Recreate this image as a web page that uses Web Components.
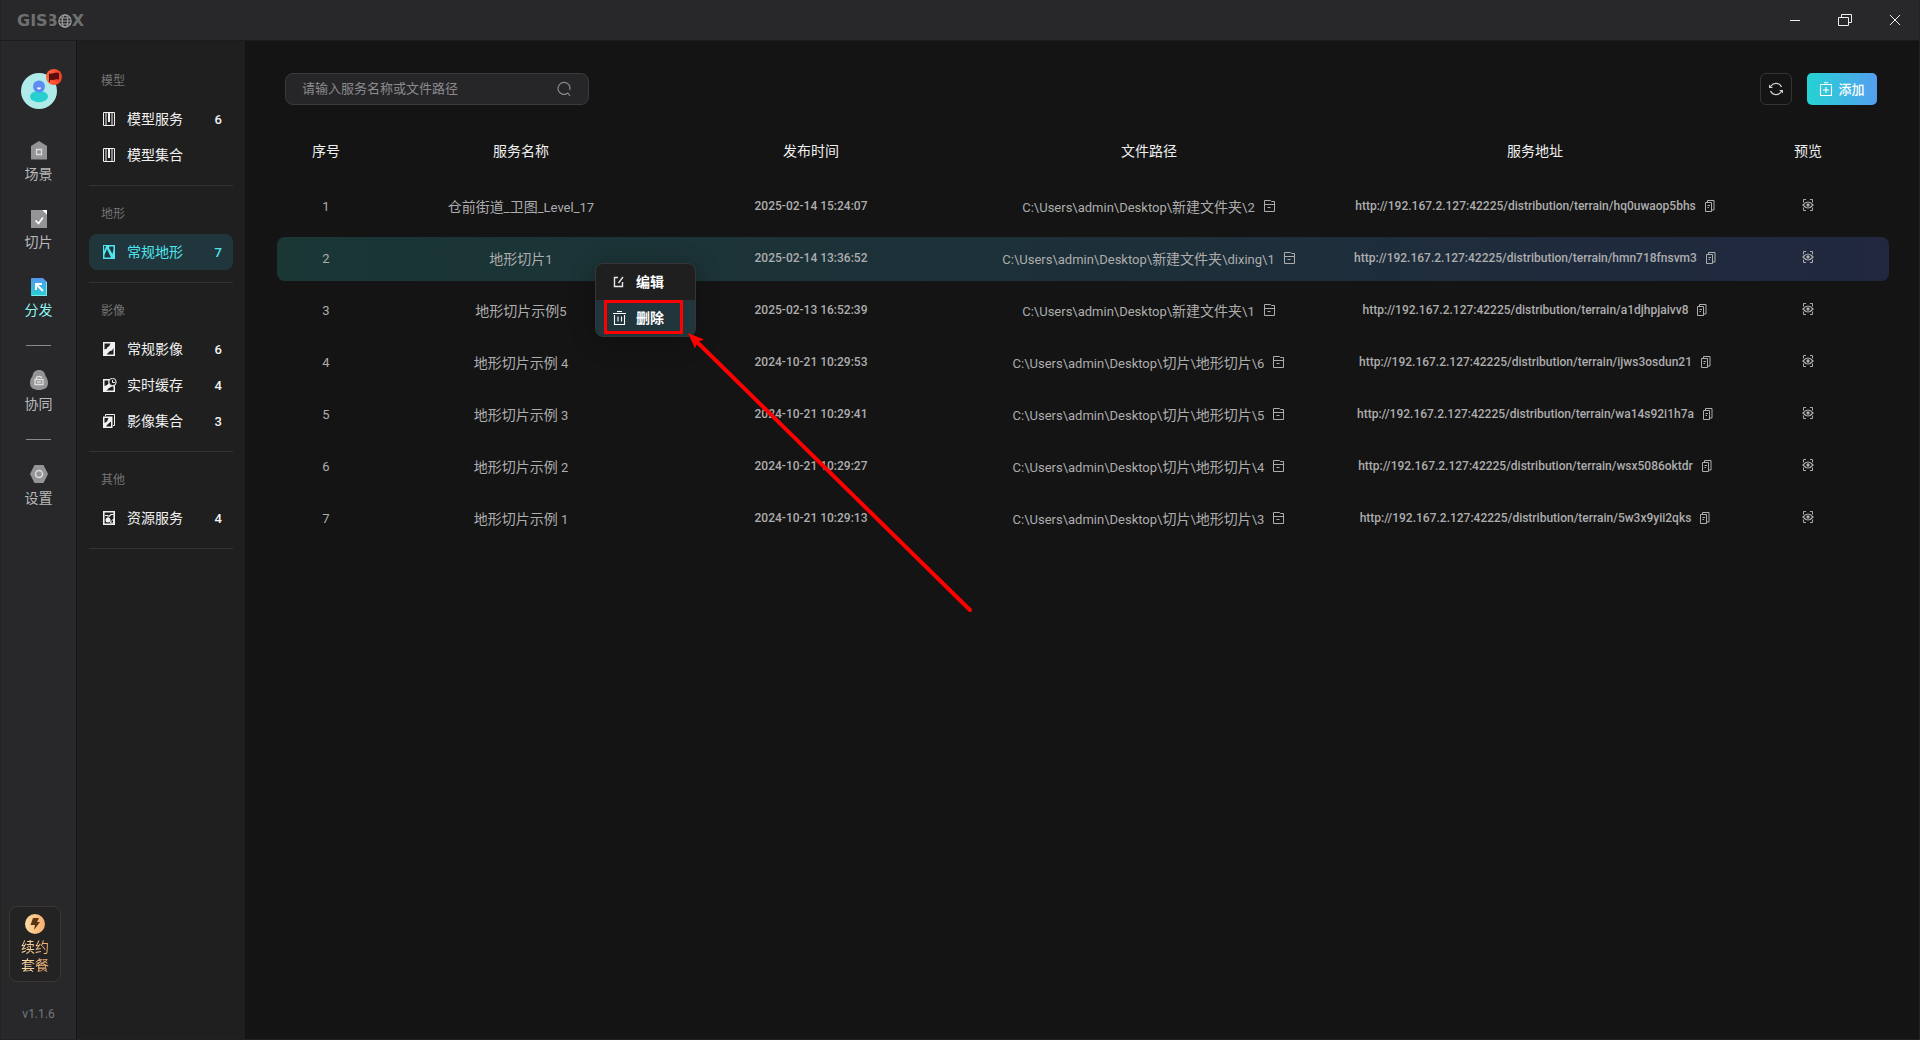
<!DOCTYPE html>
<html lang="zh-CN">
<head>
<meta charset="utf-8">
<title>GISBOX</title>
<style>
html, body { margin: 0; height: 100%; background: #141414; }
body { font-family: Roboto, "Noto Sans CJK SC", sans-serif; font-size: 14px; color: #dedede; }
</style>
</head>
<body>
<gb-app></gb-app>

<template id="t-app">
<style>
:host { display: flex; flex-direction: column; min-height: 100vh; position: relative; box-sizing: border-box; border: 1px solid #222224; border-top: 0; background: #141414; overflow: hidden; }
.body { flex: 1; display: flex; }
main { flex: 1; min-width: 0; padding: 32px 30px 32px 32px; display: flex; flex-direction: column; gap: 24px; }
</style>
<gb-titlebar></gb-titlebar>
<div class="body">
  <gb-rail></gb-rail>
  <gb-sidebar></gb-sidebar>
  <main>
    <gb-toolbar></gb-toolbar>
    <gb-table></gb-table>
  </main>
</div>
<gb-context-menu></gb-context-menu>
<gb-annotation></gb-annotation>
</template>

<template id="t-titlebar">
<style>
:host { display: flex; align-items: center; justify-content: space-between; height: 40px; background: #28282a; border-bottom: 1px solid #1c1c1d; padding: 0 16px; }
.logo { display: flex; align-items: center; font: 700 16px/20px "DejaVu Sans", sans-serif; color: #6f6f70; padding-top: 2px; }
.logo span.b { clip-path: inset(0 0 0 4px); margin-left: -2px; }
.logo svg { width: 14px; height: 14px; color: #a4a4a5; }
.win { display: flex; gap: 34px; }
button { all: unset; width: 16px; height: 16px; display: grid; place-items: center; color: #eee; }
</style>
<div class="logo"><span>GIS</span><span class="b">B</span><svg viewBox="0 0 14 14" fill="none" stroke="currentColor" stroke-width="1.1"><circle cx="7" cy="7" r="6.200"/><ellipse cx="7" cy="7" rx="2.800" ry="6"/><path d="M1 7h12M2 4h10M2 10h10"/></svg><span>X</span></div>
<div class="win">
  <button aria-label="最小化"><svg width="16" height="16" fill="none" stroke="currentColor"><path d="M3 8.500h10"/></svg></button>
  <button aria-label="还原"><svg width="16" height="16" fill="none" stroke="currentColor"><path d="M1.500 5.500h10v8h-10zM4.500 5.500v-3h10v8h-3"/></svg></button>
  <button aria-label="关闭"><svg width="16" height="16" fill="none" stroke="currentColor"><path d="M3 3l10 10M13 3L3 13"/></svg></button>
</div>
</template>

<template id="t-rail">
<style>
:host { display: flex; flex-direction: column; width: 75px; background: #28282b; border-right: 1px solid #151515; }
.avatar { all: unset; position: relative; width: 36px; height: 36px; margin: 32px auto 31px; }
.avatar svg { display: block; }
.avatar .badge { position: absolute; right: -5px; top: -4px; }
nav { display: flex; flex-direction: column; gap: 23px; }
hr { border: 0; height: 1px; width: 25px; margin: 1px auto; background: #8a8a8c; }
.grow { flex: 1; }
.renew { all: unset; box-sizing: border-box; width: 52px; height: 76px; margin-left: 8px; border: 1px solid #3e3530; border-radius: 8px; background: #232324; display: flex; flex-direction: column; align-items: center; padding-top: 7px; font-size: 14px; line-height: 18px; text-align: center; }
.renew svg { display: block; margin-bottom: 4px; }
.renew span { background: linear-gradient(90deg, #fde0ad, #f5a869); -webkit-background-clip: text; background-clip: text; color: transparent; width: 28px; }
.ver { font-size: 12px; line-height: 16px; color: #77787b; text-align: center; padding: 24px 0 17px; }
</style>
<button class="avatar" aria-label="账号">
<svg width="36" height="36"><circle cx="18" cy="18" r="18" fill="#b0ebea"/><ellipse cx="18" cy="23.500" rx="9" ry="5.800" fill="#27cfce"/><circle cx="18" cy="13.500" r="6" fill="#5c8cf4"/><path d="M16 14.500h4a2 2 0 0 1-4 0z" fill="#fff"/></svg>
<svg class="badge" width="16" height="16"><defs><linearGradient id="bg"><stop stop-color="#ff6a43"/><stop offset="1" stop-color="#f83a22"/></linearGradient></defs><circle cx="8" cy="8" r="8" fill="url(#bg)"/><path d="M3 4.500q3 .500 5-.500t5 0v6.500q-3-.500-5 .300t-4 0V13H3z" fill="#5b0f0c"/></svg>
</button>
<nav>
  <gb-rail-item icon="scene">场景</gb-rail-item>
  <gb-rail-item icon="slice">切片</gb-rail-item>
  <gb-rail-item icon="share" active>分发</gb-rail-item>
  <hr>
  <gb-rail-item icon="collab">协同</gb-rail-item>
  <hr>
  <gb-rail-item icon="setting">设置</gb-rail-item>
</nav>
<div class="grow"></div>
<button class="renew"><svg width="20" height="20"><defs><linearGradient id="g"><stop stop-color="#fddba4"/><stop offset="1" stop-color="#f9ad6b"/></linearGradient></defs><circle cx="10" cy="10" r="10" fill="url(#g)"/><path d="M8 4h6l-2 4h3l-6 8 1-5H5.500z" fill="#5a3413"/></svg><span>续约</span><span>套餐</span></button>
<div class="ver">v1.1.6</div>
</template>

<template id="t-rail-item">
<style>
:host { display: block; color: #b9b9ba; }
:host([active]) { color: #8ff5ef; }
a { display: flex; flex-direction: column; align-items: center; gap: 3px; color: inherit; text-decoration: none; font-size: 14px; line-height: 22px; }
</style>
<a href="#"><gb-icon></gb-icon><slot></slot></a>
</template>

<template id="t-sidebar">
<style>
:host { display: block; width: 144px; background: #1f1f1f; padding: 12px 12px 0; }
</style>
<gb-menu-section label="模型">
  <gb-menu-item icon="model" count="6">模型服务</gb-menu-item>
  <gb-menu-item icon="model">模型集合</gb-menu-item>
</gb-menu-section>
<gb-menu-section label="地形">
  <gb-menu-item icon="terrain" count="7" active>常规地形</gb-menu-item>
</gb-menu-section>
<gb-menu-section label="影像">
  <gb-menu-item icon="image" count="6">常规影像</gb-menu-item>
  <gb-menu-item icon="cache" count="4">实时缓存</gb-menu-item>
  <gb-menu-item icon="images" count="3">影像集合</gb-menu-item>
</gb-menu-section>
<gb-menu-section label="其他">
  <gb-menu-item icon="resource" count="4">资源服务</gb-menu-item>
</gb-menu-section>
</template>

<template id="t-menu-section">
<style>
:host { display: block; border-bottom: 1px solid #333334; padding-bottom: 12px; }
h2 { margin: 0; padding: 19px 12px 11px; font-size: 12px; line-height: 18px; font-weight: 400; color: #747475; }
</style>
<h2></h2><slot></slot>
</template>

<template id="t-menu-item">
<style>
:host { display: block; color: #f2f2f2; }
:host([active]) { color: #4fe5ee; background: #21363c; border-radius: 8px; }
a { display: flex; align-items: center; height: 36px; padding: 0 11px 0 14px; color: inherit; text-decoration: none; }
gb-icon { margin-right: 10px; }
.t { padding-bottom: 2px; }
.c { margin-left: auto; font-weight: 500; font-size: 13px; }
</style>
<a href="#"><gb-icon></gb-icon><span class="t"><slot></slot></span><span class="c"></span></a>
</template>

<template id="t-toolbar">
<style>
:host { display: flex; align-items: center; padding: 0 12px 0 8px; }
.search { box-sizing: border-box; width: 304px; height: 32px; display: flex; align-items: center; border: 1px solid #3b3b3d; border-radius: 8px; background: #262629; padding: 0 16px; color: #8b8b8d; }
input { all: unset; flex: 1; min-width: 0; font-size: 13px; line-height: 20px; }
input::placeholder { color: #8b8b8d; }
.search button { all: unset; display: flex; }
.r { margin-left: auto; display: flex; gap: 15px; }
.refresh { all: unset; box-sizing: border-box; width: 32px; height: 32px; border: 1px solid #343437; border-radius: 6px; display: grid; place-items: center; color: #d0d0d0; }
.add { all: unset; box-sizing: border-box; width: 70px; height: 32px; border-radius: 5px; background: linear-gradient(90deg, #24d3d3, #549ff0); display: flex; align-items: center; justify-content: center; gap: 5px; color: #fff; font-size: 13px; font-weight: 500; }
.add span { padding-bottom: 2px; }
</style>
<label class="search"><input type="text" placeholder="请输入服务名称或文件路径" aria-label="搜索"><button aria-label="搜索"><gb-icon name="search"></gb-icon></button></label>
<div class="r"><button class="refresh" aria-label="刷新"><gb-icon name="refresh"></gb-icon></button><button class="add"><gb-icon name="add"></gb-icon><span>添加</span></button></div>
</template>

<template id="t-table">
<style>
:host { display: block; }
table, thead { display: block; }
tbody { display: flex; flex-direction: column; gap: 8px; padding-top: 12px; }
tr { display: grid; grid-template-columns: 98fr 292fr 288fr 388fr 384fr 162fr; height: 44px; align-items: center; border-radius: 8px; }
tr.on { background: linear-gradient(90deg, #1a3635, #1d2f39 55%, #21283f); }
th, td { display: flex; align-items: center; justify-content: center; padding: 0 0 2px; white-space: nowrap; }
th { font-weight: 400; color: #f0f0f0; }
td { color: #adadae; }
.lat { font-size: 13px; }
.code { font-size: 12px; font-weight: 500; }
button { all: unset; display: flex; margin-left: 9px; }
td:last-child button { margin: 0 0 2px; }
</style>
<table>
<thead><tr><th>序号</th><th>服务名称</th><th>发布时间</th><th>文件路径</th><th>服务地址</th><th>预览</th></tr></thead>
<tbody></tbody>
</table>
</template>

<template id="t-context-menu">
<style>
:host { position: absolute; left: 594px; top: 263px; z-index: 2; width: 99px; border: 1px solid #36363a; border-radius: 8px; overflow: hidden; background: #1f1f1f; box-shadow: 0 4px 24px rgba(0,0,0,.25); }
button { all: unset; box-sizing: border-box; width: 100%; height: 36px; padding-left: 16px; display: flex; align-items: center; gap: 10px; color: #fff; font-size: 14px; font-weight: 700; }
span { padding-bottom: 2px; }
.on { background: #21363c; }
</style>
<button><gb-icon name="edit"></gb-icon><span>编辑</span></button>
<button class="on"><gb-icon name="trash"></gb-icon><span>删除</span></button>
</template>

<template id="t-annotation">
<style>
:host { position: absolute; left: 0; top: 0; z-index: 3; pointer-events: none; }
svg { display: block; }
</style>
<svg width="1000" height="640"><rect x="604.500" y="301.500" width="76" height="31" fill="none" stroke="#f00" stroke-width="3"/><path d="M695 341L969 610" stroke="#f00" stroke-width="4" stroke-linecap="round"/><path d="M687 333L703 339.500 696.500 342 694 348.500z" fill="#f00"/></svg>
</template>

<script>
const ICONS = {
  scene: [20, 20, '<path d="M10 1l8 5v13.500H2V6z" fill="#949496"/><path d="M7.500 9.500h5v5h-5z" fill="none" stroke="#ddd" stroke-width="1.300"/>'],
  slice: [20, 20, '<path d="M2 2h11l5 5v13H2z" fill="#949496"/><path d="M13 2h5v5z" fill="#fff"/><path d="M6.500 12.500l3 3 4.500-6" fill="none" stroke="#fff" stroke-width="1.700"/>'],
  share: [20, 20, '<defs><linearGradient id="s" x2="0" y2="1"><stop stop-color="#5597ee"/><stop offset="1" stop-color="#28d0d5"/></linearGradient></defs><path d="M3 2h11l4 4v14H3q-1 0-1-1V3q0-1 1-1z" fill="url(#s)"/><path d="M2.500 19.500h15V6" fill="none" stroke="#7ae9e9"/><path d="M7 14V8h6M7.500 8.500l6.500 6.500" fill="none" stroke="#fff" stroke-width="2"/>'],
  collab: [20, 20, '<path d="M10 0c4 0 6 2.500 6.500 6 1.500 2 2.500 4 2.500 7 0 5-4 7-9 7s-9-2-9-7c0-3 1-5 2.500-7C4 2.500 6 0 10 0z" fill="#949496"/><path d="M6 9.500h8v5H6zM7.500 9.500V8q0-1.500 2.500-1.500T12.500 8M8 12h4" fill="none" stroke="#ddd" stroke-width="1.300"/>'],
  setting: [20, 20, '<path d="M5.500 1h9L19 10l-4.500 9h-9L1 10z" fill="#949496"/><circle cx="10" cy="10" r="3.500" fill="none" stroke="#ddd" stroke-width="1.500"/>'],
  model: [14, 14, '<path d="M.5.500h11v13H.5z" fill="none" stroke="currentColor"/><path d="M3 1v12M9 1v12" stroke="currentColor" stroke-width="2" stroke-opacity=".5"/><path d="M5 1h2v9H5z" fill="currentColor"/>'],
  terrain: [14, 14, '<path d="M0 0h12v14H0z" fill="currentColor"/><path d="M1.500 12.500V10L4 4l4 8.500zM6 3l3.500 6L10.500 4V1.500h-4zM1 1h2L1.500 6z" fill="#21363c"/>'],
  image: [14, 14, '<path d="M0 0h12v14H0z" fill="currentColor"/><path d="M1.500 1.500h6L6 4.500 4.500 5 4 6.500l-2.500 1zM3.500 12.500L6 10l1-1 2-.500L10.500 6v6.500z" fill="#1f1f1f"/>'],
  cache: [14, 14, '<path d="M0 1h12v13H0z" fill="currentColor"/><path d="M1.500 2.500h4v3L4 7l-2.500 1zM3.500 12.500L6 10l3-1.500h1.500v4z" fill="#1f1f1f"/><circle cx="9.500" cy="4" r="3.700" fill="#1f1f1f" stroke="currentColor"/><path d="M9.500 2v2.500H12" fill="none" stroke="currentColor"/>'],
  images: [14, 14, '<path d="M2.500 2V.5h9v11H10" fill="none" stroke="currentColor"/><path d="M0 2.500h9.500V14H0z" fill="currentColor"/><path d="M1.500 4h4L4 7.500 1.500 9zM8 7.500v5H3L5 10z" fill="#1f1f1f"/>'],
  resource: [14, 14, '<path d="M.8.800h10.400v12.400H.8z" fill="none" stroke="currentColor" stroke-width="1.600"/><path d="M2 4.500h3.500M6 5.500L8 3.500h2.500" stroke="currentColor" stroke-width="1.200" fill="none"/><circle cx="5" cy="9" r="2.500" fill="currentColor"/><path d="M5 5v4M7.500 11l3-3v4h-3z" stroke="currentColor"/>'],
  search: [16, 16, '<path d="M11.500 12.300A6 6 0 1 1 13.800 9M11.500 11.500l2.500 3.500" fill="none" stroke="currentColor" stroke-width="1.200"/>'],
  refresh: [16, 16, '<path d="M3 5A6 6 0 0 1 13.500 6M13 11A6 6 0 0 1 2.500 10" fill="none" stroke="currentColor" stroke-width="1.300"/><path d="M1 3.500V7h4zM15 12.500V9h-4z" fill="currentColor"/>'],
  add: [14, 16, '<path d="M1.500 4.500v10h11v-10M1 3.500h12M5 1.800h4M7 6v6M4 9h6" fill="none" stroke="#fff" stroke-width="1.100"/>'],
  edit: [14, 14, '<path d="M6 2.500H2.500v9h8V7M6.500 8l4.500-6" fill="none" stroke="#e8e8e8" stroke-width="1.400"/>'],
  trash: [14, 16, '<path d="M2.500 5v9.500h10V5M1 3.500h13M5 1.500h5M6 6.500v5M9.500 6.500v5" fill="none" stroke="#fff" stroke-width="1.100"/>'],
  file: [12, 12, '<path d="M.5.500h6l1 1h3v10H.5zM1 4.500h9M3.500 7.500h3" fill="none" stroke="currentColor"/>'],
  copy: [10, 12, '<path d="M.5 2.500h6v9h-6zM2.500 2V.5h6.500V10H7M2.500 5.500h2.500M2.500 7.500h1.500" fill="none" stroke="currentColor"/>'],
  eye: [12, 12, '<path d="M1.500 3.500v-3h2.500M8 .500h2.500v3M10.500 8.500v3H8M4 11.500H1.500v-3" fill="none" stroke="currentColor"/><path d="M1 6q5-6 10 0q-5 6-10 0z" fill="none" stroke="currentColor" stroke-width="1.200"/><circle cx="6" cy="6" r="1.700" fill="currentColor"/>']
};

class Base extends HTMLElement {
  constructor() {
    super();
    const t = document.getElementById('t-' + this.localName.slice(3));
    this.attachShadow({ mode: 'open' });
    if (t) this.shadowRoot.append(document.importNode(t.content, true));
  }
  $(s) { return this.shadowRoot.querySelector(s); }
}

customElements.define('gb-icon', class extends Base {
  static get observedAttributes() { return ['name']; }
  attributeChangedCallback(_, __, name) {
    const [w, h, body] = ICONS[name];
    this.shadowRoot.innerHTML = `<style>:host{display:inline-flex;flex:none}svg{display:block}</style><svg width="${w}" height="${h}" viewBox="0 0 ${w} ${h}" aria-hidden="true">${body}</svg>`;
  }
});

customElements.define('gb-rail-item', class extends Base {
  connectedCallback() { this.$('gb-icon').setAttribute('name', this.getAttribute('icon')); }
});
customElements.define('gb-menu-item', class extends Base {
  connectedCallback() {
    this.$('gb-icon').setAttribute('name', this.getAttribute('icon'));
    this.$('.c').textContent = this.getAttribute('count') || '';
  }
});
customElements.define('gb-menu-section', class extends Base {
  connectedCallback() { this.$('h2').textContent = this.getAttribute('label'); }
});

const HOST = 'http://192.167.2.127:42225/distribution/terrain/';
const DESK = 'C:\\Users\\admin\\Desktop\\';
const ROWS = [
  ['仓前街道_卫图_Level_17', '2025-02-14 15:24:07', '新建文件夹\\2', 'hq0uwaop5bhs'],
  ['地形切片1', '2025-02-14 13:36:52', '新建文件夹\\dixing\\1', 'hmn718fnsvm3'],
  ['地形切片示例5', '2025-02-13 16:52:39', '新建文件夹\\1', 'a1djhpjaivv8'],
  ['地形切片示例 4', '2024-10-21 10:29:53', '切片\\地形切片\\6', 'ijws3osdun21'],
  ['地形切片示例 3', '2024-10-21 10:29:41', '切片\\地形切片\\5', 'wa14s92i1h7a'],
  ['地形切片示例 2', '2024-10-21 10:29:27', '切片\\地形切片\\4', 'wsx5086oktdr'],
  ['地形切片示例 1', '2024-10-21 10:29:13', '切片\\地形切片\\3', '5w3x9yii2qks']
];
// Latin runs are set a step smaller than the Chinese text around them.
const mix = s => '<span>' + s.replace(/[\x20-\x7e]+/g, m => `<span class="lat">${m}</span>`) + '</span>';
const code = s => `<span class="code">${s}</span>`;
const act = (icon, label) => `<button aria-label="${label}"><gb-icon name="${icon}"></gb-icon></button>`;

customElements.define('gb-table', class extends Base {
  connectedCallback() {
    this.$('tbody').innerHTML = ROWS.map(([name, time, path, id], i) =>
      `<tr class="${i === 1 ? 'on' : ''}"><td>${mix(String(i + 1))}</td><td>${mix(name)}</td><td>${code(time)}</td>` +
      `<td>${mix(DESK + path)}${act('file', '打开')}</td><td>${code(HOST + id)}${act('copy', '复制')}</td><td>${act('eye', '预览')}</td></tr>`).join('');
  }
});

for (const n of ['titlebar', 'rail', 'sidebar', 'toolbar', 'context-menu', 'annotation', 'app'])
  customElements.define('gb-' + n, class extends Base {});
</script>
</body>
</html>
